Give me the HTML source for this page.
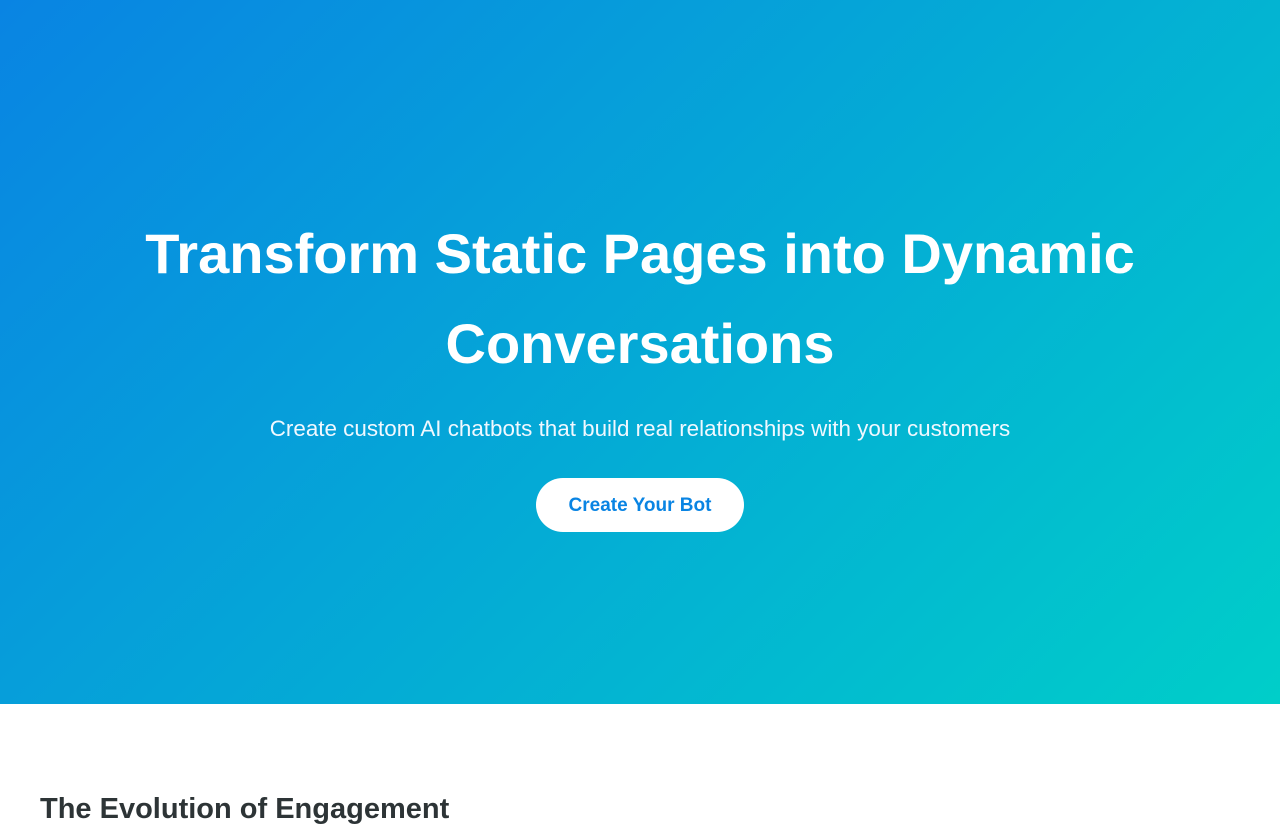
<!DOCTYPE html>
<html><head><style>
*{margin:0;padding:0;box-sizing:border-box}
body{font-family:"Liberation Sans",Arial,sans-serif;background:#fff;width:1280px;height:800px;overflow:hidden}
.hero{height:704px;background:linear-gradient(135deg,#0984e3 0%,#00cec9 100%);color:#fff;text-align:center;position:relative}
h1{position:absolute;top:209px;left:0;right:0;font-size:56px;line-height:90px;font-weight:bold}
p{position:absolute;top:415px;left:0;right:0;font-size:22.4px;line-height:28px;color:#f0f8ff}
.btn{position:absolute;top:478px;left:536px;width:208px;height:54px;border-radius:27px;background:#fff;color:#0984e3;font-size:19px;font-weight:bold;line-height:55px}
h2{position:absolute;top:792px;left:40px;font-size:29px;font-weight:bold;color:#2d3436;line-height:34px}
</style></head><body>
<div class="hero">
<h1>Transform Static Pages into Dynamic<br>Conversations</h1>
<p>Create custom AI chatbots that build real relationships with your customers</p>
<div class="btn">Create Your Bot</div>
</div>
<h2>The Evolution of Engagement</h2>
</body></html>
